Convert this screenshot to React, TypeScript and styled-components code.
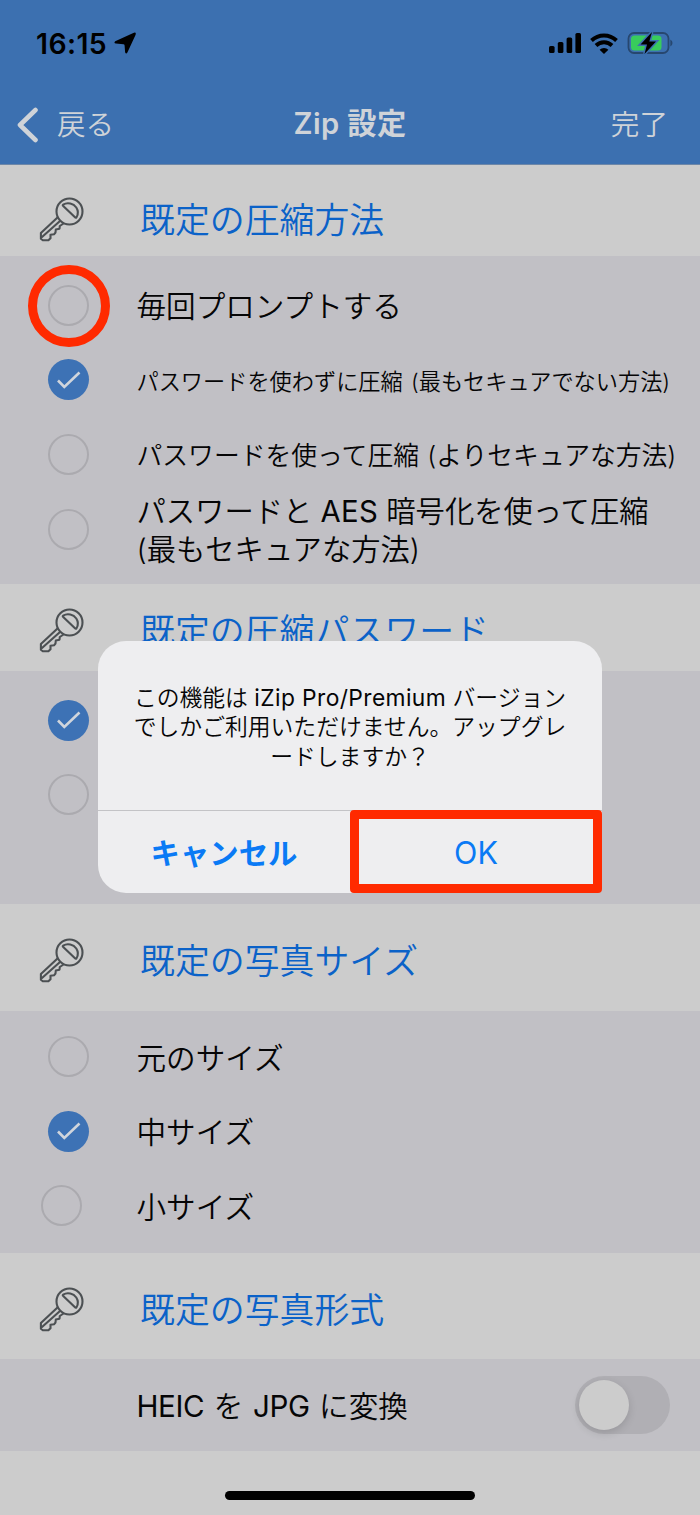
import React from "react";
import styled, { createGlobalStyle, css } from "styled-components";

const GlobalStyle = createGlobalStyle`
  * { box-sizing: border-box; }
  body {
    margin: 0;
    background: #cccccc;
    font-family: Inter, "Noto Sans CJK JP", sans-serif;
    font-weight: 350;
    color: #050506;
  }
  button { font: inherit; background: none; border: 0; padding: 0; }
`;

const Screen = styled.div`
  position: relative;
  width: 700px;
  height: 1515px;
  overflow: hidden;
  display: flex;
  flex-direction: column;
  background: #cccccc;
`;

const Header = styled.header`
  height: 165px;
  flex: none;
  background: #3c70b0;
  border-bottom: 1px solid #6d87a8;
`;

const StatusBar = styled.div`
  display: flex;
  align-items: center;
  height: 86px;
  padding: 0 27px 0 36px;
`;

const Clock = styled.span`
  width: 78px;
  padding-top: 2px;
  font-size: 28.4px;
  font-weight: 600;
  letter-spacing: 0.4px;
  line-height: 30px;
  white-space: nowrap;
  color: #000;
`;

const StatusIcons = styled.div`
  display: flex;
  align-items: center;
  gap: 9px;
  margin-left: auto;
`;

const NavBar = styled.nav`
  display: grid;
  grid-template-columns: 1fr auto 1fr;
  align-items: center;
  height: 76px;
  padding: 0 32px 0 16px;
  color: #cfd3d8;
`;

const NavButton = styled.button<{ $end?: boolean }>`
  display: flex;
  align-items: center;
  gap: 18px;
  justify-self: ${(p) => (p.$end ? "end" : "start")};
  padding-top: 1px;
  font-size: 28.6px;
  line-height: 40px;
  color: inherit;
`;

const Title = styled.h1`
  margin: 0 -16px 0 0;
  font-size: 29.2px;
  line-height: 40px;
  font-weight: 600;
  letter-spacing: 0.4px;
  white-space: nowrap;
`;

const SectionHeader = styled.div<{ $height: number; $top: number }>`
  flex: none;
  display: flex;
  align-items: flex-start;
  height: ${(p) => p.$height}px;
  padding: ${(p) => p.$top}px 0 0 38px;
`;

const SectionTitle = styled.h2`
  margin: 2px 0 0 53px;
  font-size: 34.9px;
  line-height: 46px;
  font-weight: 350;
  color: #0b62c8;
  white-space: nowrap;
`;

const Options = styled.div<{ $height: number; $top?: number }>`
  flex: none;
  height: ${(p) => p.$height}px;
  padding-top: ${(p) => p.$top ?? 12}px;
  background: #c1c0c5;
`;

const OptionRow = styled.div`
  display: flex;
  align-items: center;
  height: 74.6px;
  padding-left: 47.5px;
`;

const RadioSlot = styled.div<{ $shift?: number }>`
  position: relative;
  flex: none;
  width: 41px;
  height: 41px;
  margin-left: ${(p) => p.$shift ?? 0}px;
  margin-right: ${(p) => 48 - (p.$shift ?? 0)}px;
`;

const Radio = styled.span<{ $on?: boolean }>`
  display: flex;
  align-items: center;
  justify-content: center;
  width: 41px;
  height: 41px;
  border-radius: 50%;
  ${(p) =>
    p.$on
      ? css`
          background: #3d72b5;
        `
      : css`
          border: 2px solid #abaaaf;
        `}
`;

const HighlightRing = styled.span`
  position: absolute;
  left: -20px;
  top: -20px;
  width: 82px;
  height: 82px;
  border: 9.5px solid #ff2a00;
  border-radius: 50%;
`;

const OptionText = styled.span<{ $size?: number; $space?: number }>`
  padding-top: 3px;
  font-size: ${(p) => p.$size ?? 29.6}px;
  line-height: 37.5px;
  word-spacing: ${(p) => p.$space ?? 0}px;
  white-space: nowrap;
`;

const Latin = styled.span<{ $track?: number }>`
  font-weight: 400;
  letter-spacing: ${(p) => p.$track ?? -0.5}px;
`;

const ToggleRow = styled.div`
  flex: none;
  display: flex;
  align-items: center;
  justify-content: space-between;
  height: 92px;
  padding: 0 30px 0 136.5px;
  background: #c1c0c5;
`;

const Toggle = styled.span`
  width: 95px;
  height: 58px;
  padding: 4px;
  border-radius: 29px;
  background: #b0afb4;
`;

const Knob = styled.span`
  display: block;
  width: 50px;
  height: 50px;
  border-radius: 50%;
  background: #cccccc;
  box-shadow: 0 3px 8px rgba(0, 0, 0, 0.14);
`;

const HomeIndicator = styled.div`
  width: 250px;
  height: 9px;
  margin: auto auto 15px;
  border-radius: 5px;
  background: #000;
`;

const Dialog = styled.div`
  position: absolute;
  left: 98px;
  top: 641px;
  width: 504px;
  height: 252px;
  display: flex;
  flex-direction: column;
  border-radius: 28px;
  background: #eeeef0;
`;

const Message = styled.p`
  margin: 0;
  height: 169px;
  padding-top: 41.5px;
  font-size: 22.8px;
  line-height: 29.8px;
  text-align: center;
  white-space: nowrap;
`;

const Actions = styled.div`
  flex: 1;
  display: grid;
  grid-template-columns: 1fr 1fr;
  border-top: 1px solid #c3c3c6;
`;

const Action = styled.button<{ $bold?: boolean }>`
  position: relative;
  padding-top: ${(p) => (p.$bold ? 3 : 1)}px;
  font-size: ${(p) => (p.$bold ? 29.4 : 30.5)}px;
  line-height: 40px;
  font-weight: ${(p) => (p.$bold ? 700 : 400)};
  color: #0a7af5;
`;

const HighlightBox = styled.span`
  position: absolute;
  inset: -1px 0 0 0;
  border: 9px solid #ff2a00;
  border-radius: 4px;
`;

const KeyIcon = () => (
  <svg width="49" height="48" viewBox="0 0 49 48" fill="none" stroke="#4c5053" strokeWidth="2.1" strokeLinejoin="round" strokeLinecap="round">
    <circle cx="31.5" cy="16.5" r="13" />
    <path d="M25.2 9.6C29.500 6.800 35.500 8.500 38.300 12.500C40.500 16 40.200 19.500 38.500 22.300Q37.800 23.200 37 22.300L25.200 11Q24.300 10.200 25.200 9.600Z" />
    <path d="M19.5 22.5L2.9 38V43.7L4.8 45.2H10.4L12.5 43.2V39.8L16 39.3L17.5 37.5L17.8 34.5L21.5 33.7L21.8 31L25.5 28.5" />
    <path d="M22 26L4 42" />
  </svg>
);

const CheckIcon = () => (
  <svg width="25" height="20" viewBox="0 0 25 20" fill="none" stroke="#d0d5dc" strokeWidth="2.6">
    <path d="M2 10.5L8.3 17L23.5 2.5" />
  </svg>
);

const LocationIcon = () => (
  <svg width="23" height="22" viewBox="0 0 23 22">
    <path d="M1.200 9.200L19.300.900Q22.700-.200 21.500 3L13.400 20.400Q12.100 22.500 11.100 20.200L10.600 13.400Q10.500 12.300 9.400 12.200L1.900 11.600Q-.600 10.900 1.200 9.200Z" />
  </svg>
);

const SignalIcon = () => (
  <svg width="32" height="20" viewBox="0 0 32 20">
    <rect x="0" y="13" width="5.6" height="7" rx="1.6" />
    <rect x="8.8" y="9" width="5.6" height="11" rx="1.6" />
    <rect x="17.6" y="4.5" width="5.6" height="15.5" rx="1.6" />
    <rect x="26.4" y="0" width="5.6" height="20" rx="1.6" />
  </svg>
);

const WifiIcon = () => (
  <svg width="28" height="21" viewBox="0 0 28 21" fill="none" stroke="#000" strokeWidth="3.9">
    <path d="M1.5 7.500A18 18 0 0 1 26.5 7.500" />
    <path d="M6 12.500A11.5 11.5 0 0 1 22 12.500" />
    <path d="M9.6 16.700A6.600 6.600 0 0 1 18.400 16.700L14 20.900Z" fill="#000" stroke="none" />
  </svg>
);

const BatteryIcon = () => (
  <svg width="46" height="24" viewBox="0 0 46 24">
    <rect x="1.500" y="2" width="40" height="20" rx="5.5" fill="none" stroke="#27476f" strokeWidth="1.8" />
    <path d="M43.300 8.5Q45.5 9.5 45.500 12T43.300 15.5Z" fill="#27476f" />
    <rect x="4" y="4.5" width="30.5" height="15" rx="3.5" fill="#38cc5c" />
    <path d="M25 1L13.500 13.5H20L17.500 23L29 10.500H22.300Z" stroke="#3c70b0" strokeWidth="3" />
    <path d="M25 1L13.500 13.5H20L17.500 23L29 10.500H22.300Z" />
  </svg>
);

const BackIcon = () => (
  <svg width="23" height="36" viewBox="0 0 23 36" fill="none" stroke="currentColor" strokeWidth="4.6" strokeLinecap="round" strokeLinejoin="round">
    <path d="M19.5 3L4 18L19.5 33" />
  </svg>
);

type OptionProps = {
  on?: boolean;
  ring?: boolean;
  shift?: number;
  size?: number;
  space?: number;
  children?: React.ReactNode;
};

const Option = ({ on, ring, shift, size, space, children }: OptionProps) => (
  <OptionRow>
    <RadioSlot $shift={shift}>
      <Radio $on={on}>{on && <CheckIcon />}</Radio>
      {ring && <HighlightRing />}
    </RadioSlot>
    <OptionText $size={size} $space={space}>{children}</OptionText>
  </OptionRow>
);

const Heading = ({ height, top, children }: { height: number; top: number; children: string }) => (
  <SectionHeader $height={height} $top={top}>
    <KeyIcon />
    <SectionTitle>{children}</SectionTitle>
  </SectionHeader>
);

export default function App() {
  return (
    <Screen>
      <GlobalStyle />
      <Header>
        <StatusBar>
          <Clock>16:15</Clock>
          <LocationIcon />
          <StatusIcons>
            <SignalIcon />
            <WifiIcon />
            <BatteryIcon />
          </StatusIcons>
        </StatusBar>
        <NavBar>
          <NavButton>
            <BackIcon />
            戻る
          </NavButton>
          <Title>Zip 設定</Title>
          <NavButton $end>完了</NavButton>
        </NavBar>
      </Header>

      <Heading height={91} top={30}>既定の圧縮方法</Heading>
      <Options $height={328}>
        <Option ring>毎回プロンプトする</Option>
        <Option on size={22.2} space={2}>パスワードを使わずに圧縮 (最もセキュアでない方法)</Option>
        <Option size={25.8} space={1}>パスワードを使って圧縮 (よりセキュアな方法)</Option>
        <Option size={29.3}>
          パスワードと <Latin $track={0.3}>AES</Latin> 暗号化を使って圧縮
          <br />
          (最もセキュアな方法)
        </Option>
      </Options>

      <Heading height={87} top={22.4}>既定の圧縮パスワード</Heading>
      <Options $height={233}>
        <Option on />
        <Option />
      </Options>

      <Heading height={107} top={32}>既定の写真サイズ</Heading>
      <Options $height={242} $top={8.5}>
        <Option>元のサイズ</Option>
        <Option on>中サイズ</Option>
        <Option shift={-7}>小サイズ</Option>
      </Options>

      <Heading height={106} top={32}>既定の写真形式</Heading>
      <ToggleRow>
        <OptionText $space={1.2}>
          <Latin $track={-0.4}>HEIC</Latin> を <Latin $track={-0.4}>JPG</Latin> に変換
        </OptionText>
        <Toggle>
          <Knob />
        </Toggle>
      </ToggleRow>
      <HomeIndicator />

      <Dialog>
        <Message>
          この機能は <Latin $track={0.4}>iZip Pro/Premium</Latin> バージョン
          <br />
          でしかご利用いただけません。アップグレ
          <br />
          ードしますか？
        </Message>
        <Actions>
          <Action $bold>キャンセル</Action>
          <Action>
            OK
            <HighlightBox />
          </Action>
        </Actions>
      </Dialog>
    </Screen>
  );
}
